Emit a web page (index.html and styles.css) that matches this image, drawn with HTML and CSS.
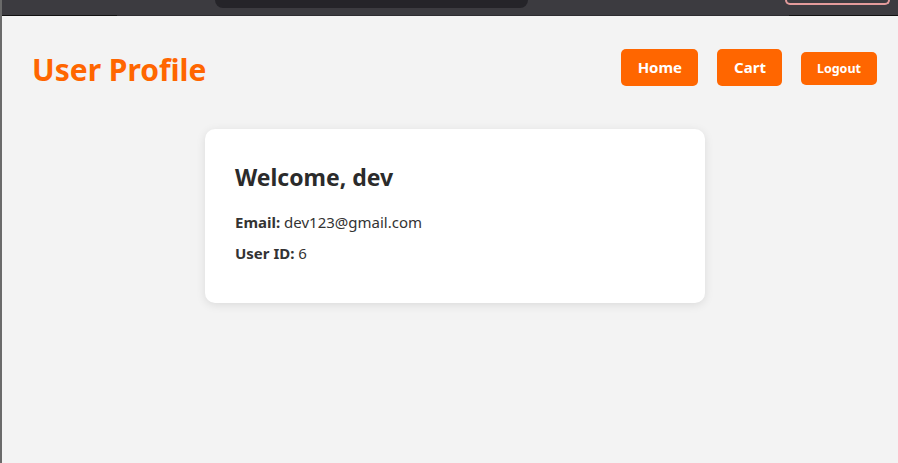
FILE: index.html
```html
<!DOCTYPE html>
<html lang="en">
<head>
<meta charset="utf-8">
<title>User Profile</title>
<link rel="stylesheet" href="styles.css">
</head>
<body>
<div class="frame">
  <div class="chrome">
    <div class="chrome-bar">
      <div class="chrome-pill"></div>
      <div class="chrome-btn"></div>
    </div>
    <div class="chrome-line">
      <span class="seg dark seg-left"></span>
      <span class="seg mid"></span>
      <span class="seg dark seg-right"></span>
    </div>
  </div>
  <div class="viewport">
    <header class="header">
      <h1 class="title">User Profile</h1>
      <nav class="nav">
        <a class="nav-btn" href="#">Home</a>
        <a class="nav-btn" href="#">Cart</a>
        <button class="nav-btn logout" type="button">Logout</button>
      </nav>
    </header>
    <main class="main">
      <section class="card">
        <h2 class="welcome">Welcome, dev</h2>
        <p class="row"><strong>Email:</strong> dev123@gmail.com</p>
        <p class="row"><strong>User ID:</strong> 6</p>
      </section>
    </main>
  </div>
</div>
</body>
</html>
```

FILE: styles.css
```css
html, body {
  margin: 0;
  padding: 0;
  height: 100%;
}
body {
  font-family: "Noto Sans", "Open Sans", sans-serif;
  background: #f3f3f3;
  color: #333;
}
.frame {
  height: 463px;
  display: flex;
  flex-direction: column;
  border-left: 2px solid #6a6a6a;
  overflow: hidden;
}
.chrome {
  flex: none;
}
.chrome-bar {
  height: 15px;
  background: #3c3b40;
  display: flex;
  align-items: flex-start;
}
.chrome-pill {
  margin-left: 213px;
  width: 313px;
  height: 8px;
  background: #252429;
  border-radius: 0 0 8px 8px;
}
.chrome-btn {
  margin-left: 257px;
  width: 101px;
  height: 3px;
  border: 2px solid #e39b9b;
  border-top: none;
  border-radius: 0 0 9px 9px;
  background: #3c3b40;
}
.chrome-line {
  height: 1px;
  display: flex;
}
.seg { display: block; height: 1px; }
.seg.dark { background: #111; }
.seg-left { width: 115px; }
.seg.mid { flex: 1; background: #2e2d31; }
.seg-right { width: 109px; }
.viewport {
  flex: 1;
  background: #f3f3f3;
}
.header {
  display: flex;
  justify-content: space-between;
  align-items: center;
  padding: 28px 21px 0 30px;
  height: 46px;
}
.title {
  margin: 0;
  font-size: 30px;
  font-weight: 700;
  color: #ff6600;
  position: relative;
  top: 2px;
}
.nav {
  display: flex;
  align-items: center;
  gap: 19px;
}
.nav-btn {
  display: inline-block;
  background: #ff6600;
  color: #fff;
  text-decoration: none;
  font-family: inherit;
  font-weight: 700;
  font-size: 15px;
  line-height: 21px;
  padding: 8px 16px 8px 17px;
  border: none;
  border-radius: 5px;
}
.logout {
  font-size: 12.5px;
  line-height: 17px;
  padding: 8px 16px;
  position: relative;
  top: 1px;
}
.main {
  padding: 39px 0 0 10px;
}
.card {
  width: 440px;
  margin: 0 auto;
  background: #fff;
  border-radius: 10px;
  padding: 30px 30px 39px;
  box-shadow: 0 2px 10px rgba(0, 0, 0, 0.1);
}
.welcome {
  margin: 0 0 20px;
  font-size: 23px;
  font-weight: 700;
  color: #2b2b2b;
  line-height: 30px;
  padding-top: 3px;
}
.row {
  margin: 0 0 10px;
  font-size: 15px;
  line-height: 21px;
  color: #333;
}
.row:last-child { margin-bottom: 0; }
.row strong { color: #333; }
```
